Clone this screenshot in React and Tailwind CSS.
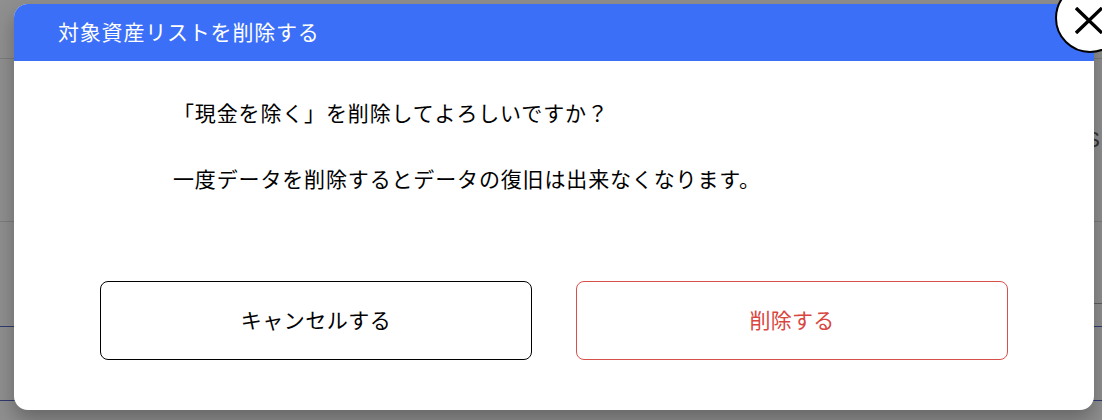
const cjk = "font-['Noto_Sans_CJK_JP','Noto_Sans',sans-serif]";

function Backdrop() {
  return (
    <div className="flex h-[420px] flex-col overflow-hidden bg-[#8f8f8f]">
      <div className="mt-[58px] h-px bg-[#7c7c7c]" />
      <div className="mt-[69px] flex justify-end pr-[2px] text-[22px] leading-6 text-[#333333] font-['Liberation_Sans',sans-serif]">S</div>
      <div className="mt-[69px] h-px bg-[#7c7c7c]" />
      <div className="mt-[81px] h-px w-[200px] self-end bg-[#5e5e5e]" />
      <div className="mt-[22px] h-px bg-[#303a70]" />
      <div className="mt-[73px] h-px bg-[#303a70]" />
    </div>
  );
}

function CloseIcon() {
  return (
    <svg width="28" height="27" viewBox="0 0 28 27" fill="none" stroke="#000000" strokeWidth="3.4">
      <path d="M1 1 L27 26 M27 1 L1 26" />
    </svg>
  );
}

export default function App() {
  return (
    <div className={`relative h-[420px] w-[1102px] overflow-hidden ${cjk}`}>
      <Backdrop />

      {/* Dialog */}
      <div className="absolute left-[14px] top-[4px] flex h-[406px] w-[1080px] flex-col rounded-[14px] bg-white shadow-[0_10px_20px_rgba(0,0,0,0.28)]">
        <div className="flex h-[57px] items-center rounded-t-[14px] bg-[#3b6ff8] pb-[2px] pl-[44px] text-[21px] tracking-[0.8px] text-white">
          対象資産リストを削除する
        </div>

        <div className="pl-[159px] pt-[33px] text-[21px] leading-[36px] tracking-[0.85px] text-black">
          <p>「現金を除く」を削除してよろしいですか？</p>
          <p className="mt-[30px]">一度データを削除するとデータの復旧は出来なくなります。</p>
        </div>

        <div className="mt-[85px] flex gap-[44px] pl-[86px]">
          <button className="h-[79px] w-[432px] rounded-lg border border-black bg-white pb-[2px] text-[21px] tracking-[0.5px] text-black">
            キャンセルする
          </button>
          <button className="h-[79px] w-[432px] rounded-lg border border-[#d8504a] bg-white pb-[2px] text-[21px] tracking-[0.3px] text-[#d9453f]">
            削除する
          </button>
        </div>
      </div>

      {/* Close button hangs over the corner */}
      <button className="absolute left-[1055px] top-[-17px] flex h-[70px] w-[70px] items-start justify-start rounded-full border-2 border-black bg-white pl-[18px] pt-[22px]">
        <CloseIcon />
      </button>
    </div>
  );
}
